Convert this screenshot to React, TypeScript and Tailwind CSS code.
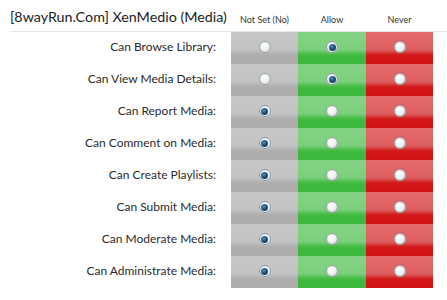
import React from 'react';

type Choice = 'unset' | 'allow' | 'never';

const permissions: { label: string; value: Choice }[] = [
  { label: 'Can Browse Library:', value: 'allow' },
  { label: 'Can View Media Details:', value: 'allow' },
  { label: 'Can Report Media:', value: 'unset' },
  { label: 'Can Comment on Media:', value: 'unset' },
  { label: 'Can Create Playlists:', value: 'unset' },
  { label: 'Can Submit Media:', value: 'unset' },
  { label: 'Can Moderate Media:', value: 'unset' },
  { label: 'Can Administrate Media:', value: 'unset' },
];

const Radio: React.FC<{ checked: boolean }> = ({ checked }) =>
  checked ? (
    <span className="flex h-[12px] w-[12px] items-center justify-center rounded-full border border-[#7d8a96] bg-[#f4f7fa] shadow-[0_0_1px_rgba(255,255,255,0.8)]">
      <span className="h-[7px] w-[7px] rounded-full bg-[radial-gradient(circle_at_40%_35%,#5d8fb8_0%,#1f4f78_45%,#0d2d4a_100%)]" />
    </span>
  ) : (
    <span className="h-[12px] w-[12px] rounded-full border border-[#9aa3a8] bg-[radial-gradient(circle_at_40%_35%,#ffffff_0%,#eef2f4_45%,#c9d2d6_100%)]" />
  );

const Cell: React.FC<{ tone: string; checked: boolean }> = ({ tone, checked }) => (
  <div className={`flex h-8 items-center justify-center pb-[2px] ${tone}`}>
    <Radio checked={checked} />
  </div>
);

export default function App() {
  return (
    <div className="h-[300px] w-[447px] bg-white font-['Lato','Liberation_Sans',sans-serif] text-[#2b2b2b]">
      <div className="ml-[10px] flex h-[32px] items-end border-b border-[#e3e9ef]">
        <h1 className="w-[221px] whitespace-nowrap pb-[4px] text-[14.3px] leading-5 text-[#222]">[8wayRun.Com] XenMedio (Media)</h1>
        <div className="w-[67px] pb-[5px] text-center text-[9px] text-[#333]">Not Set (No)</div>
        <div className="w-[68px] pb-[5px] text-center text-[9px] text-[#333]">Allow</div>
        <div className="w-[67px] pb-[5px] text-center text-[9px] text-[#333]">Never</div>
      </div>
      <div className="ml-[10px]">
        {permissions.map(p => (
          <div key={p.label} className="flex h-8 items-center">
            <div className="w-[221px] pb-[2px] pr-[15px] text-right text-[12px]">{p.label}</div>
            <div className="w-[67px]">
              <Cell tone="bg-[linear-gradient(to_bottom,#c7c7c7_0%,#c3c3c3_55%,#adadad_72%,#ababab_100%)]" checked={p.value === 'unset'} />
            </div>
            <div className="w-[68px]">
              <Cell tone="bg-[linear-gradient(to_bottom,#84d284_0%,#7ccf7c_55%,#41b941_72%,#3db73d_100%)]" checked={p.value === 'allow'} />
            </div>
            <div className="w-[67px]">
              <Cell tone="bg-[linear-gradient(to_bottom,#e26a6a_0%,#de6060_55%,#d11818_72%,#cf1111_100%)]" checked={p.value === 'never'} />
            </div>
          </div>
        ))}
      </div>
    </div>
  );
}
